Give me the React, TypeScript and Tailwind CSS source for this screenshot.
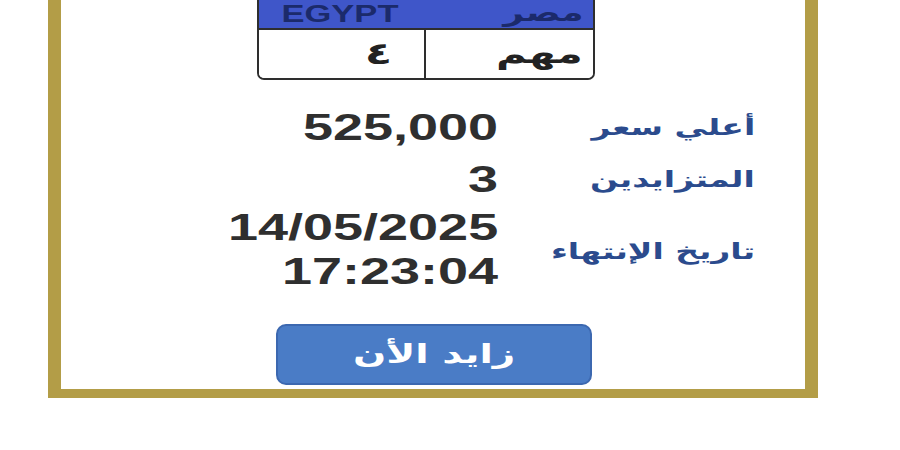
import React from "react";

const S = ({ children, className = "" }: { children: React.ReactNode; className?: string }) => (
  <span dir="rtl" className={"inline-block scale-x-150 " + className}>{children}</span>
);

export default function App() {
  const ar = { fontFamily: '"DejaVu Sans", "Liberation Sans", sans-serif' };
  const num = { fontFamily: '"Liberation Sans", Arial, sans-serif' };
  return (
    <div className="w-[900px] h-[450px] bg-white overflow-hidden">
      <div className="ml-[48px] w-[770px] h-[398px] border-x-[13px] border-b-[9px] border-[#b39d47] bg-white flex flex-col">
        {/* plate */}
        <div className="ml-[196px] w-[338px] h-[80px] border-x-2 border-b-2 border-[#2e2e2e] rounded-b-[7px] overflow-hidden flex flex-col">
          <div className="h-[30px] bg-[#3f56c9] flex border-b-2 border-[#2e2e2e]">
            <div className="w-[167px] h-full flex items-center justify-center text-[#1b2a6b] font-bold text-[23px] leading-none" style={num}>
              <span className="inline-block scale-x-150 -translate-x-[3px]">EGYPT</span>
            </div>
            <div className="flex-1 h-full flex items-start justify-end pr-[10px] pt-[1px] text-[#1b2a6b] font-bold text-[24px] leading-[24px]" style={ar}>
              <S className="origin-right">مصر</S>
            </div>
          </div>
          <div className="flex-1 flex bg-white">
            <div className="w-[167px] border-r-2 border-[#2e2e2e] flex items-center justify-end pr-[32px] text-[#222] text-[30px] font-bold leading-none" style={ar}>
              <S className="origin-right">٤</S>
            </div>
            <div className="flex-1 flex items-center justify-end pr-[10px] text-[#222] text-[28px] font-bold leading-none" style={ar}>
              <S className="origin-right">مهم</S>
            </div>
          </div>
        </div>

        {/* rows */}
        <div className="mt-[30px] flex items-center h-[36px]">
          <div className="w-[437px] text-right text-[36px] font-bold text-[#2f2f2f] leading-[36px]" style={num}>
            <span className="inline-block origin-right scale-x-150">525,000</span>
          </div>
          <div className="w-[257px] text-right text-[22px] font-bold text-[#2b4b8d] leading-[36px]" style={ar}>
            <S className="origin-right">أعلي سعر</S>
          </div>
        </div>
        <div className="mt-[16px] flex items-center h-[36px]">
          <div className="w-[437px] text-right text-[36px] font-bold text-[#2f2f2f] leading-[36px]" style={num}>
            <span className="inline-block origin-right scale-x-150">3</span>
          </div>
          <div className="w-[257px] text-right text-[22px] font-bold text-[#2b4b8d] leading-[36px]" style={ar}>
            <S className="origin-right">المتزايدين</S>
          </div>
        </div>
        <div className="mt-[8px] flex items-center">
          <div className="w-[437px] text-right text-[36px] font-bold text-[#2f2f2f] leading-[44px] flex flex-col items-end" style={num}>
            <span className="inline-block origin-right scale-x-150">14/05/2025</span>
            <span className="inline-block origin-right scale-x-150">17:23:04</span>
          </div>
          <div className="w-[257px] text-right text-[22px] font-bold text-[#2b4b8d] leading-[36px] pt-[4px]" style={ar}>
            <S className="origin-right">تاريخ الإنتهاء</S>
          </div>
        </div>

        {/* button */}
        <div className="mt-[30px] ml-[215px] w-[316px] h-[61px] rounded-[10px] bg-[#4a7cc6] border-2 border-[#3c68b0] flex items-center justify-center text-white text-[26px] font-bold" style={ar}>
          <S>زايد الأن</S>
        </div>
      </div>
    </div>
  );
}
